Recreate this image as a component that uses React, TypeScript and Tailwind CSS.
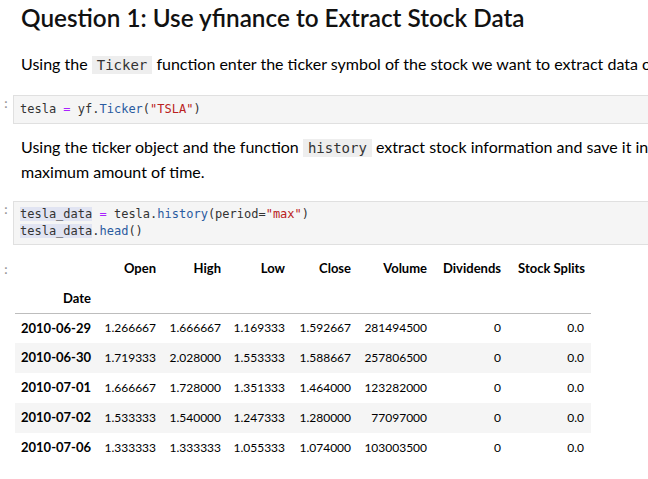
const sans = { fontFamily: 'Lato, "Open Sans", sans-serif' }

type Row = { date: string; open: string; high: string; low: string; close: string; volume: string; div: string; split: string }

const rows: Row[] = [
  { date: '2010-06-29', open: '1.266667', high: '1.666667', low: '1.169333', close: '1.592667', volume: '281494500', div: '0', split: '0.0' },
  { date: '2010-06-30', open: '1.719333', high: '2.028000', low: '1.553333', close: '1.588667', volume: '257806500', div: '0', split: '0.0' },
  { date: '2010-07-01', open: '1.666667', high: '1.728000', low: '1.351333', close: '1.464000', volume: '123282000', div: '0', split: '0.0' },
  { date: '2010-07-02', open: '1.533333', high: '1.540000', low: '1.247333', close: '1.280000', volume: '77097000', div: '0', split: '0.0' },
  { date: '2010-07-06', open: '1.333333', high: '1.333333', low: '1.055333', close: '1.074000', volume: '103003500', div: '0', split: '0.0' },
]

const cols = ['Open', 'High', 'Low', 'Close', 'Volume', 'Dividends', 'Stock Splits']
const widths = ['w-[82px]', 'w-[65px]', 'w-[65px]', 'w-[64px]', 'w-[66px]', 'w-[76px]', 'w-[74px]', 'w-[84px]']

function InlineCode({ children }: { children: string }) {
  return (
    <code className="bg-[#eeeeee] px-[5px] py-[1px] text-[14px] font-['DejaVu_Sans_Mono',monospace] text-[#333]">
      {children}
    </code>
  )
}

function Prompt() {
  return <span className="w-[13px] shrink-0 pl-[2px] text-[13px] text-[#999] font-['DejaVu_Sans_Mono',monospace]">:</span>
}

export default function App() {
  return (
    <div className="w-[648px] h-[479px] overflow-hidden bg-white text-black" style={sans}>
      <div className="w-[1100px]">
        {/* markdown: heading + intro */}
        <div className="pl-[21px] pt-[3px]">
          <h2 className="text-[24.3px] leading-[30px] font-semibold text-[#111]">Question 1: Use yfinance to Extract Stock Data</h2>
          <p className="mt-[19px] text-[16px] leading-[24px] whitespace-nowrap">
            Using the <InlineCode>Ticker</InlineCode> function enter the ticker symbol of the stock we want to extract data on to create a ticker object. The stock is Tesla and its ticker symbol is TSLA.
          </p>
        </div>

        {/* code cell 1 */}
        <div className="flex mt-[18px] leading-[17px]">
          <Prompt />
          <div className="flex-1 bg-[#f5f5f5] border border-[#e0e0e0] px-[6px] py-[5px] text-[12px] font-['DejaVu_Sans_Mono',monospace] text-[#333]">
            tesla <span className="text-[#aa22ff]">=</span> yf.<span className="text-[#2a5ba0]">Ticker</span>(<span className="text-[#ba2121]">"TSLA"</span>)
          </div>
        </div>

        {/* markdown 2 */}
        <div className="pl-[21px] mt-[11px] text-[16px] leading-[24px] whitespace-nowrap">
          <p>
            Using the ticker object and the function <InlineCode>history</InlineCode> extract stock information and save it in a dataframe named tesla_data. Set the period parameter to max so we get information for the
          </p>
          <p>maximum amount of time.</p>
        </div>

        {/* code cell 2 */}
        <div className="flex mt-[17px] leading-[17px]">
          <Prompt />
          <div className="flex-1 bg-[#f5f5f5] border border-[#e0e0e0] px-[6px] py-[4px] text-[12px] font-['DejaVu_Sans_Mono',monospace] text-[#333]">
            <div>
              <span className="bg-[#e1e4f2]">tesla_data</span> <span className="text-[#aa22ff]">=</span> tesla.<span className="text-[#2a5ba0]">history</span>(period=<span className="text-[#ba2121]">"max"</span>)
            </div>
            <div>
              <span className="bg-[#e1e4f2]">tesla_data</span>.<span className="text-[#2a5ba0]">head</span>()
            </div>
          </div>
        </div>

        {/* output */}
        <div className="flex mt-[9px]">
          <span className="w-[15px] shrink-0 pl-[2px] pt-[6px] text-[13px] text-[#999] font-['DejaVu_Sans_Mono',monospace]">:</span>
          <table className="table-fixed border-collapse text-[12px] text-black">
            <colgroup>
              {widths.map((w, i) => <col key={i} className={w} />)}
            </colgroup>
            <thead>
              <tr className="h-[30px]">
                <th className="px-[6px]"></th>
                {cols.map(c => (
                  <th key={c} className="px-[6px] text-right text-[13px] font-bold whitespace-nowrap">{c}</th>
                ))}
              </tr>
              <tr className="h-[29px] border-b border-[#bdbdbd]">
                <th className="px-[6px] text-right text-[13px] font-bold">Date</th>
                {cols.map(c => <th key={c}></th>)}
              </tr>
            </thead>
            <tbody>
              {rows.map((r, i) => (
                <tr key={r.date} className={i % 2 === 1 ? 'h-[30px] bg-[#f5f5f5]' : 'h-[30px]'}>
                  <th className="px-[6px] text-right text-[13px] font-bold whitespace-nowrap">{r.date}</th>
                  <td className="px-[6px] text-right">{r.open}</td>
                  <td className="px-[6px] text-right">{r.high}</td>
                  <td className="px-[6px] text-right">{r.low}</td>
                  <td className="px-[6px] text-right">{r.close}</td>
                  <td className="px-[6px] text-right">{r.volume}</td>
                  <td className="px-[6px] text-right">{r.div}</td>
                  <td className="px-[7px] text-right">{r.split}</td>
                </tr>
              ))}
            </tbody>
          </table>
        </div>
      </div>
    </div>
  )
}
